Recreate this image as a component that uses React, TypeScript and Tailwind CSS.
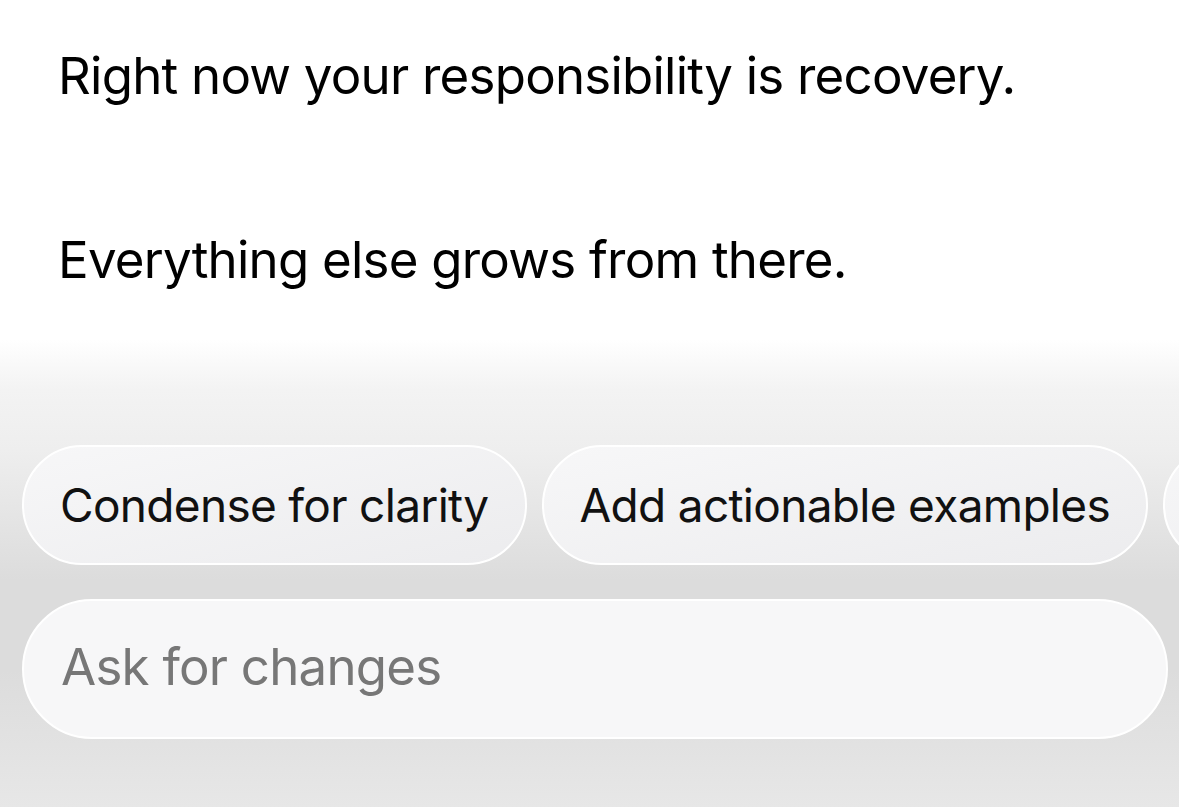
import React from 'react'

const chips = ['Condense for clarity', 'Add actionable examples', 'Make it shorter']

export default function App() {
  return (
    <div
      className="flex h-[807px] w-[1179px] flex-col overflow-hidden bg-white text-black"
      style={{ fontFamily: 'Inter, "Noto Sans", sans-serif' }}
    >
      {/* message body */}
      <div className="px-[58px] pt-[44px] text-[51px] leading-[64px] tracking-[-0.015em]">
        <p>Right now your responsibility is recovery.</p>
        <p className="mt-[120px]">Everything else grows from there.</p>
      </div>

      {/* composer sheet: frosted backdrop fades in from the top */}
      <div className="mt-[48px] flex flex-1 flex-col gap-[34px] bg-[linear-gradient(to_bottom,#ffffff_0px,#fafafa_20px,#f3f3f3_50px,#eeeeee_110px,#dcdcdc_240px,#dcdcdc_330px,#e7e7e7_100%)] pt-[105px] pl-[22px]">
        <div className="flex gap-[15px] overflow-hidden">
          {chips.map((c) => (
            <div
              key={c}
              className="flex h-[120px] shrink-0 items-center rounded-full border-2 border-white bg-gradient-to-br from-[#f7f7f8] to-[#ececee] px-[36px] text-[46px] tracking-[-0.015em] text-[#111]"
            >
              {c}
            </div>
          ))}
        </div>
        <div className="flex h-[140px] w-[1146px] items-center rounded-full border-2 border-white bg-[#f7f7f8] px-[37px] pb-[4px] text-[51px] tracking-[-0.015em] text-[#777]">
          Ask for changes
        </div>
      </div>
    </div>
  )
}
